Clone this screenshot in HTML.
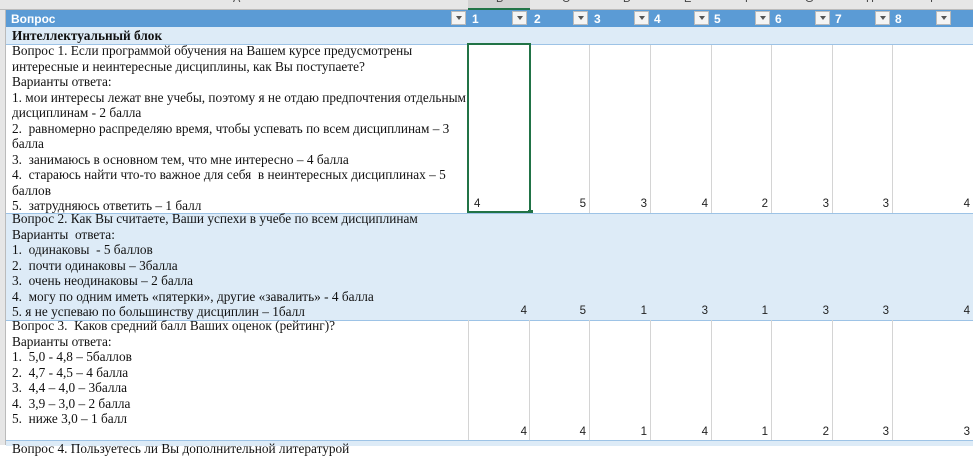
<html><head><style>
body{margin:0;width:973px;height:445px;overflow:hidden;background:#fff;position:relative;font-family:"Liberation Serif",serif;}
.a{position:absolute}
.t{position:absolute;left:12px;font-size:13.3px;line-height:15.5px;white-space:nowrap;color:#111}
.n{position:absolute;font-family:"Liberation Sans",sans-serif;font-size:11.5px;color:#222;text-align:right}
.vl{position:absolute;width:1px;background:#d4d4d4}
.fb{position:absolute;top:11px;width:15px;height:14px;background:#f4f4f4;border:1px solid #bbb;box-sizing:border-box}
.fb:after{content:"";position:absolute;left:3.5px;top:4px;border-left:3.5px solid transparent;border-right:3.5px solid transparent;border-top:4px solid #555}
.h{position:absolute;top:12px;color:#fff;font-family:"Liberation Sans",sans-serif;font-size:12px;font-weight:bold}
.ch{position:absolute;top:-7px;font-family:"Liberation Sans",sans-serif;font-size:11px;color:#444}
</style></head><body>
<div class="a" style="left:0;top:0;width:973px;height:9px;background:#e6e6e6;border-bottom:1px solid #bbb"></div>
<div class="a" style="left:468px;top:0;width:62px;height:8px;background:#d2d2d2;border-bottom:2px solid #217346"></div>
<div class="ch" style="left:233px">A</div><div class="ch" style="left:496px">B</div><div class="ch" style="left:562px">C</div><div class="ch" style="left:623px">D</div><div class="ch" style="left:684px">E</div><div class="ch" style="left:745px">F</div><div class="ch" style="left:805px">G</div><div class="ch" style="left:866px">H</div><div class="ch" style="left:930px">I</div>
<div class="a" style="left:0;top:10px;width:5px;height:435px;background:#e6e6e6;border-right:1px solid #bbb"></div>
<div class="a" style="left:6px;top:10px;width:967px;height:17px;background:#5b9bd5"></div>
<div class="h" style="left:11px">Вопрос</div>
<div class="fb" style="left:451px"></div>
<div class="h" style="left:472px">1</div><div class="fb" style="left:512px"></div>
<div class="h" style="left:534px">2</div><div class="fb" style="left:573px"></div>
<div class="h" style="left:594px">3</div><div class="fb" style="left:634px"></div>
<div class="h" style="left:654px">4</div><div class="fb" style="left:694px"></div>
<div class="h" style="left:714px">5</div><div class="fb" style="left:755px"></div>
<div class="h" style="left:775px">6</div><div class="fb" style="left:815px"></div>
<div class="h" style="left:835px">7</div><div class="fb" style="left:875px"></div>
<div class="h" style="left:895px">8</div><div class="fb" style="left:936px"></div>
<div class="a" style="left:6px;top:27px;width:967px;height:17px;background:#ddebf7;border-bottom:1px solid #9dc3e6"></div>
<div class="t" style="top:28px;font-weight:bold">Интеллектуальный блок</div>
<div class="vl" style="left:529px;top:45px;height:168px"></div><div class="vl" style="left:589px;top:45px;height:168px"></div><div class="vl" style="left:650px;top:45px;height:168px"></div><div class="vl" style="left:711px;top:45px;height:168px"></div><div class="vl" style="left:771px;top:45px;height:168px"></div><div class="vl" style="left:832px;top:45px;height:168px"></div><div class="vl" style="left:892px;top:45px;height:168px"></div>
<div class="t" style="top:43px">Вопрос 1. Если программой обучения на Вашем курсе предусмотрены<br>интересные и неинтересные дисциплины, как Вы поступаете?<br>Варианты ответа:<br>1. мои интересы лежат вне учебы, поэтому я не отдаю предпочтения отдельным<br>дисциплинам - 2 балла<br>2.&nbsp; равномерно распределяю время, чтобы успевать по всем дисциплинам – 3<br>балла<br>3.&nbsp; занимаюсь в основном тем, что мне интересно – 4 балла<br>4.&nbsp; стараюсь найти что-то важное для себя&nbsp; в неинтересных дисциплинах – 5<br>баллов<br>5.&nbsp; затрудняюсь ответить – 1 балл</div>
<div class="n" style="left:474px;top:198px">4</div>
<div class="n" style="left:530px;width:56px;top:198px">5</div><div class="n" style="left:590px;width:57px;top:198px">3</div><div class="n" style="left:651px;width:57px;top:198px">4</div><div class="n" style="left:712px;width:56px;top:198px">2</div><div class="n" style="left:772px;width:57px;top:198px">3</div><div class="n" style="left:833px;width:56px;top:198px">3</div><div class="n" style="left:893px;width:77px;top:198px">4</div>
<div class="a" style="left:467px;top:43px;width:64px;height:170px;border:2px solid #217346;box-sizing:border-box"></div>
<div class="a" style="left:528px;top:210px;width:5px;height:5px;background:#217346"></div>
<div class="a" style="left:6px;top:213px;width:967px;height:106px;background:#ddebf7;border-top:1px solid #9dc3e6;border-bottom:1px solid #9dc3e6"></div>
<div class="t" style="top:211px">Вопрос 2. Как Вы считаете, Ваши успехи в учебе по всем дисциплинам<br>Варианты&nbsp; ответа:<br>1.&nbsp; одинаковы&nbsp; - 5 баллов<br>2.&nbsp; почти одинаковы – 3балла<br>3.&nbsp; очень неодинаковы – 2 балла<br>4.&nbsp; могу по одним иметь «пятерки», другие «завалить» - 4 балла<br>5. я не успеваю по большинству дисциплин – 1балл</div>
<div class="n" style="left:469px;width:58px;top:305px">4</div><div class="n" style="left:530px;width:56px;top:305px">5</div><div class="n" style="left:590px;width:57px;top:305px">1</div><div class="n" style="left:651px;width:57px;top:305px">3</div><div class="n" style="left:712px;width:56px;top:305px">1</div><div class="n" style="left:772px;width:57px;top:305px">3</div><div class="n" style="left:833px;width:56px;top:305px">3</div><div class="n" style="left:893px;width:77px;top:305px">4</div>
<div class="vl" style="left:468px;top:320px;height:120px"></div><div class="vl" style="left:529px;top:320px;height:120px"></div><div class="vl" style="left:589px;top:320px;height:120px"></div><div class="vl" style="left:650px;top:320px;height:120px"></div><div class="vl" style="left:711px;top:320px;height:120px"></div><div class="vl" style="left:771px;top:320px;height:120px"></div><div class="vl" style="left:832px;top:320px;height:120px"></div><div class="vl" style="left:892px;top:320px;height:120px"></div>
<div class="t" style="top:318px">Вопрос 3.&nbsp; Каков средний балл Ваших оценок (рейтинг)?<br>Варианты ответа:<br>1.&nbsp; 5,0 - 4,8 – 5баллов<br>2.&nbsp; 4,7 - 4,5 – 4 балла<br>3.&nbsp; 4,4 – 4,0 – 3балла<br>4.&nbsp; 3,9 – 3,0 – 2 балла<br>5.&nbsp; ниже 3,0 – 1 балл</div>
<div class="n" style="left:469px;width:58px;top:426px">4</div><div class="n" style="left:530px;width:56px;top:426px">4</div><div class="n" style="left:590px;width:57px;top:426px">1</div><div class="n" style="left:651px;width:57px;top:426px">4</div><div class="n" style="left:712px;width:56px;top:426px">1</div><div class="n" style="left:772px;width:57px;top:426px">2</div><div class="n" style="left:833px;width:56px;top:426px">3</div><div class="n" style="left:893px;width:77px;top:426px">3</div>
<div class="a" style="left:6px;top:440px;width:967px;height:5px;background:#ddebf7;border-top:1px solid #9dc3e6"></div>
<div class="t" style="top:441px">Вопрос 4. Пользуетесь ли Вы дополнительной литературой</div>
</body></html>
